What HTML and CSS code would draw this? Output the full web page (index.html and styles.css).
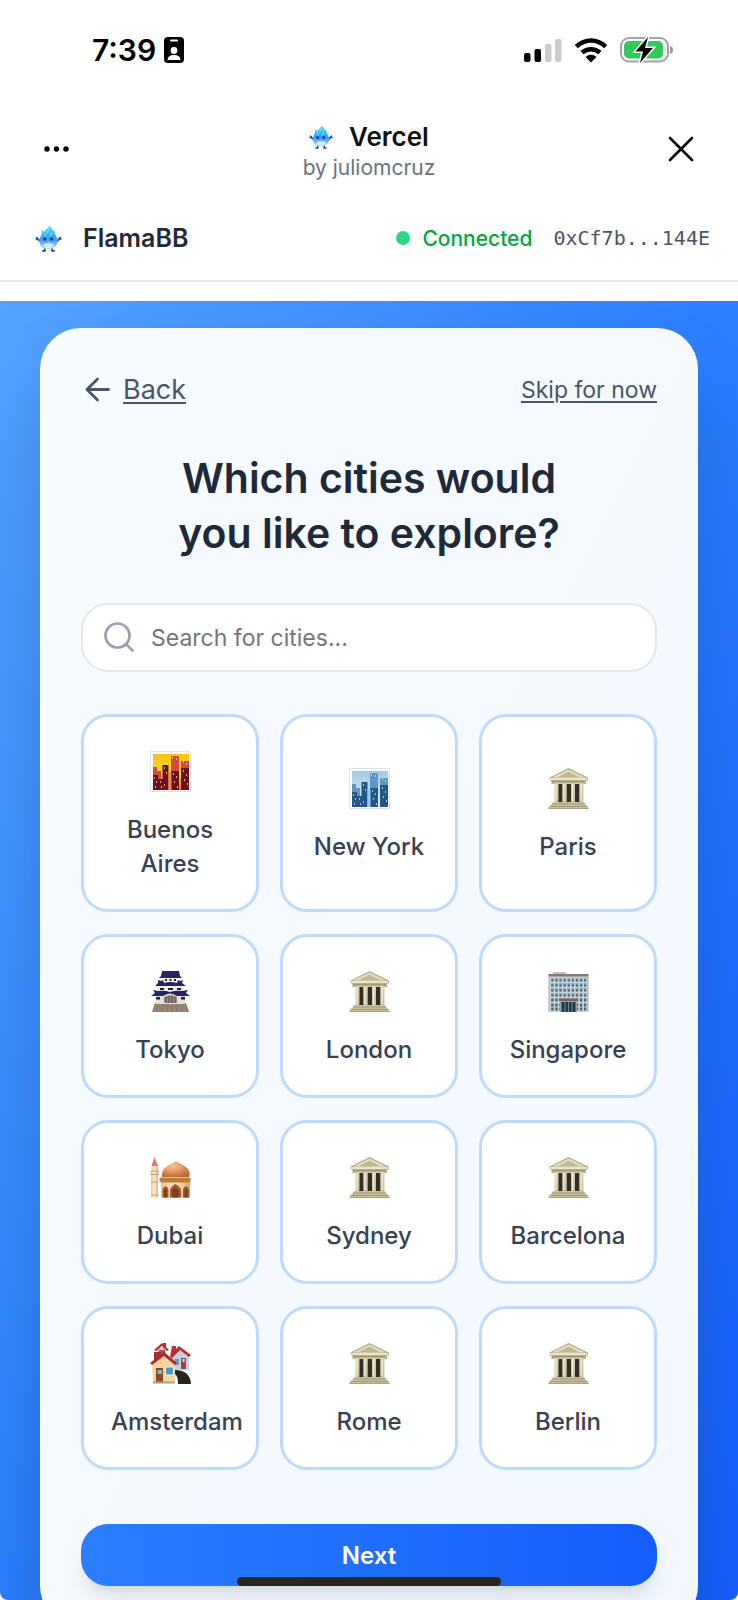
FILE: index.html
```html
<!DOCTYPE html>
<html lang="en">
<head>
<meta charset="utf-8">
<meta name="viewport" content="width=device-width, initial-scale=1">
<title>FlamaBB</title>
<link rel="stylesheet" href="styles.css">
</head>
<body>
<svg class="sprite" aria-hidden="true">
  <defs>
    <linearGradient id="flame" x1="0" y1="0" x2="0" y2="1">
      <stop offset="0" stop-color="#5fe3ef"/><stop offset=".45" stop-color="#2bb0f2"/><stop offset=".62" stop-color="#4a98f2"/><stop offset="1" stop-color="#b5e6f8"/>
    </linearGradient>
    <linearGradient id="sunset" x1="0" y1="0" x2="0" y2="1">
      <stop offset="0" stop-color="#f7c211"/><stop offset=".5" stop-color="#fbd92c"/><stop offset="1" stop-color="#f06a35"/>
    </linearGradient>
    <linearGradient id="daysky" x1="0" y1="0" x2="0" y2="1">
      <stop offset="0" stop-color="#a5cbe0"/><stop offset="1" stop-color="#d8f0fb"/>
    </linearGradient>
    <linearGradient id="stone" x1="0" y1="0" x2="0" y2="1">
      <stop offset="0" stop-color="#d9d4b4"/><stop offset="1" stop-color="#c5bf9b"/>
    </linearGradient>
    <radialGradient id="dome" cx=".4" cy=".3" r=".75">
      <stop offset="0" stop-color="#fbc39b"/><stop offset=".5" stop-color="#e8935f"/><stop offset="1" stop-color="#b86535"/>
    </radialGradient>
    <linearGradient id="sand" x1="0" y1="0" x2="1" y2="0">
      <stop offset="0" stop-color="#f0c393"/><stop offset=".5" stop-color="#fde6c8"/><stop offset="1" stop-color="#e0a469"/>
    </linearGradient>
  </defs>
  <symbol id="mascot" viewBox="0 0 26 26">
    <path d="M6 16.500 2.500 13.500M20 16.500l3.500-3" stroke="#2b7be0" stroke-width="2" stroke-linecap="round"/>
    <path d="m3.500 14.500-3-1 1-.6L1.500 11.500l2 1.500M22.500 14.500l3-1-1-.6 0-1.400-2 1.500" fill="#1f4fae" stroke="#1f4fae" stroke-width=".8"/>
    <path d="M9.500 21v4H7M16.500 21v4H19" fill="none" stroke="#23408c" stroke-width="1.700"/>
    <path d="M14 0c.3 2.500 2.800 3 3.300 6l1.200-1.500c.6 2 .2 3.500 1.600 5.500 3.600 5.300.9 13.400-7.100 13.400S2.300 15.300 5.900 10c1-1.500.3-3.500 1.100-5.500L8.900 7C10 4 13.500 3 14 0Z" fill="url(#flame)"/>
    <path d="M13 3c1 2-1 3-1.500 5M16 7c0 2-1 2-1 4M9 8c0 1.500 1 1.500 1 3" fill="none" stroke="#8ef1f3" stroke-width=".9"/>
    <ellipse cx="9.500" cy="13.500" rx="1.700" ry="1.700" fill="#1d3bc0"/><ellipse cx="16" cy="13.500" rx="1.700" ry="1.700" fill="#1d3bc0"/>
    <path d="M11.500 16q1.400 1.500 2.800 0" fill="#e2f6ff" stroke="#2457b8" stroke-width=".6"/>
    <ellipse cx="13" cy="19.800" rx="5" ry="2.600" fill="#c7eefa"/>
  </symbol>
  <symbol id="temple" viewBox="0 0 41 41">
    <path d="M20.500 0 40 9.500V12l-2 1v3H3.500v-3l-2-1V9.500Z" fill="#b7b08b"/>
    <path d="M20.500 1.500 37 9.500H4Z" fill="#e4dfc3"/><path d="M20.500 3.800 31 9H10Z" fill="#bfb893"/>
    <path d="M2 10h37v2H2Z" fill="#e9e5cc"/><path d="M4 13.500h33" stroke="#8f8968" stroke-width="1.200" stroke-dasharray="1.200 1"/>
    <path d="M7 15h28v20H7Z" fill="#d1cba8"/>
    <path d="M10 16h4.500v18H10ZM18.500 16H23v18h-4.500ZM27 16h4.500v18H27Z" fill="#352e27"/>
    <path d="M6.500 15.500h4v18h-4ZM14.500 15.500h4v18h-4ZM23 15.500h4v18h-4ZM31.500 15.500h4v18h-4Z" fill="url(#stone)"/>
    <path d="M8 16v17M16 16v17M24.500 16v17M33 16v17" stroke="#f0ecd6" stroke-width="1.200"/>
    <path d="M5 34h31l1 2 3.500 3v2H.5v-2L4 36Z" fill="#c9c39f"/>
    <path d="M4 36h33M2 38.500h37" stroke="#9d9776"/><path d="M.5 40.500h40" stroke="#a8a17e"/>
  </symbol>
  <symbol id="skyline-dusk" viewBox="0 0 41 41">
    <path d="M.5.500h40v40H.5Z" fill="#fff" stroke="#e3e4e6"/>
    <path d="M3 3h36v36H3Z" fill="url(#sunset)"/>
    <path d="M3 16h4v4h4v19H3ZM21 6l1-1h6l1 1v33h-8ZM31 10h8v29h-8Z" fill="#d64742"/>
    <path d="M12.500 14h6v25h-6ZM3 24h5v15H3ZM8 28h9v11H8ZM21 20h8v19h-8ZM31 17h8v22h-8Z" fill="#68131c"/>
    <path d="M18.500 21h3v18h-3Z" fill="#f18864"/>
    <path d="M22 7h1M26 8h1M33 11h1M36 13h1M14 17h1M16 22h1M4 27h1M6 31h1M10 31h1M14 34h1M23 23h1M26 26h1M24 31h1M27 36h1M33 20h1M36 24h1M34 29h1M37 33h1M5 36h1M11 36h1" stroke="#ffe3a4" stroke-width="1.400"/>
  </symbol>
  <symbol id="skyline-day" viewBox="0 0 41 41">
    <path d="M.5.500h40v40H.5Z" fill="#fff" stroke="#d8e6ec"/>
    <path d="M3 3h36v36H3Z" fill="url(#daysky)"/>
    <path d="M3 16h4v4h4v19H3ZM21 6l1-1h6l1 1v33h-8ZM31 10h8v29h-8Z" fill="#5d97c5"/>
    <path d="M12.500 14h6v25h-6ZM3 24h5v15H3ZM8 28h9v11H8ZM21 20h8v19h-8ZM31 17h8v22h-8Z" fill="#245586"/>
    <path d="M18.500 21h3v18h-3Z" fill="#92cbed"/>
    <path d="M22 7h1M26 8h1M33 11h1M36 13h1M14 17h1M16 22h1M4 27h1M6 31h1M10 31h1M14 34h1M23 23h1M26 26h1M24 31h1M27 36h1M33 20h1M36 24h1M34 29h1M37 33h1M5 36h1M11 36h1" stroke="#c5ebff" stroke-width="1.400"/>
  </symbol>
  <symbol id="castle" viewBox="0 0 41 41">
    <path d="m5 32-3 9h37l-3-9Z" fill="#8e7b6c"/><path d="M4 34h32M3 37h34M3 39.500h35" stroke="#a8988a" stroke-dasharray="3 2"/>
    <path d="M6 23h29v10H6Z" fill="#e7dfd7"/><path d="M8 14h25v9H8ZM13 6h15v8H13Z" fill="#f2ece5"/>
    <path d="M12 0h17l1 5 2 2H9l2-2ZM8 9l3 1 2-1 1 3q6-2 13 0l1-3 2 1 3-1-1 3 4 3H5l3-3ZM3 19l5 1q6-1 12 1 6-2 12-1l6-1-2 3 4 3H27q-7-5-14 0H1l4-3Z" fill="#25265f"/>
    <path d="M15 8h2v2h-2ZM19.500 8h2v2h-2ZM24 8h2v2h-2ZM10 17h4v2h-4ZM18 17h5v2h-5ZM27 17h4v2h-4ZM6 26h4v2.500H6ZM31 26h4v2.500h-4Z" fill="#22202f"/>
    <path d="M14 26q6.500-4 13 0v6H14Z" fill="#938c86"/><path d="M16 26v6M19 25v7M22 25v7M25 26v6" stroke="#4e4846"/>
  </symbol>
  <symbol id="office" viewBox="0 0 41 41">
    <path d="M5 1h13v3H5Z" fill="#c5c0bf"/><path d="M1 5h39v36H1Z" fill="#cdd0d3"/><path d="M.5 3h40v2.500H.5Z" fill="#85777a"/>
    <path d="M3.200 9h35M3.200 14h35M3.200 19h35M3.200 24h35M3.200 29h35M3.200 34h35M3.200 38h35" stroke="#3e6680" stroke-width="3" stroke-dasharray="2.400 1.700"/>
    <path d="M3.200 8h35M3.200 13h35M3.200 18h35M3.200 23h35" stroke="#7fb7d2" stroke-width="1.200" stroke-dasharray="2.400 1.700"/>
    <path d="M12 29h17v12H12Z" fill="#a0a4a8"/><path d="M13.500 31h14v10h-14Z" fill="#203945"/><path d="M17 31v10M20.500 31v10M24 31v10" stroke="#71909b"/>
    <path d="M11 27.500h19V30H11Z" fill="#766468"/><path d="M1 5v36M40 5v36" stroke="#a9abaf"/>
  </symbol>
  <symbol id="mosque" viewBox="0 0 41 41">
    <path d="m4.500 0 3.500 9H1.500Z" fill="#cd7e6e"/><path d="M1.500 9H8v5l1 2-1 1.500v23H1V17.500L0 16l1.500-2Z" fill="url(#sand)"/>
    <path d="M1 14h7.500M1 17.500h7.500M1 25h7.500M1 38h7.500" stroke="#cf9869"/>
    <path d="M12 20q-1-9 9-13l5-2.500L31 7q11 5 8 13Z" fill="url(#dome)"/>
    <path d="M11 25h29v15.500H11Z" fill="url(#sand)"/><path d="M9.500 20.500h31V24L39 25.500H11.500L9.500 24Z" fill="#bd7d31"/>
    <path d="M20 40.500V33q1-3.500 5.500-6 4.500 2.500 5.500 6v7.500ZM12.500 40.500v-8Q13 30 15.500 29q2.500 1 3 3.500v8ZM33 40.500v-8q.5-2.500 3-3.500 2.500 1 3 3.500v8Z" fill="#a65a2b"/>
    <path d="M22 40.500V33l3.500-3 3.500 3v7.500ZM14 40.500v-7l1.500-2 1.500 2v7ZM34.500 40.500v-7l1.500-2 1.500 2v7Z" fill="#7d4220"/>
  </symbol>
  <symbol id="houses" viewBox="0 0 41 41">
    <path d="M7 5h9v14H7Z" fill="#e7b8ac"/><path d="M9 7h6v6H9Z" fill="#75656b"/><path d="m4 7 8-7 7 7-2 1-5-5-6 5Z" fill="#b62e31"/><path d="M13 0h3v5h-3Z" fill="#b92d30"/>
    <path d="M22 13 30 5l9 8v14H21Z" fill="#c3d2df"/><path d="m20 14 2-11h4v3l3-3 12 9-2 2-9-7-8 8Z" fill="#b92d30"/>
    <path d="M31 15h5v11h-5Z" fill="#aa3e39"/><path d="M32.500 16h2v3h-2Z" fill="#e3e5df"/><path d="M25 16h4v6h-4Z" fill="#629bba"/>
    <path d="M25 27q15 0 16 14H28Q28 33 25 31Z" fill="#292424"/>
    <path d="M2 21 14 11l11 10v18H3Z" fill="#f3d6a1"/><path d="M0 20 4 17V9h7v3l3-3 13 11-2 2-11-9L2 22Z" fill="#ae2831"/>
    <path d="M6 25h7v14H6Z" fill="#8a492e"/><path d="M7.500 27H12v4H7.500Z" fill="#7eb7c8"/><path d="M15.500 24h8v8h-8Z" fill="#4e99c3" stroke="#faf1d6"/><path d="M3 39.500h22" stroke="#a7a087" stroke-width="2"/>
  </symbol>
</svg>

<div class="screen">
  <header class="top">
    <div class="status">
      <div class="status-group status-time">
        <span>7:39</span>
        <svg width="20" height="26" viewBox="0 0 20 26" aria-hidden="true">
          <rect width="20" height="26" rx="4"/><rect x="6" y="2.500" width="8" height="2" rx="1" fill="#fff"/>
          <circle cx="10" cy="13.500" r="3.400" fill="#fff"/><path d="M3.500 23q.3-5 6.500-5t6.500 5Z" fill="#fff"/>
        </svg>
      </div>
      <div class="status-group status-icons">
        <svg width="38" height="25" viewBox="0 0 38 25" aria-hidden="true">
          <rect y="15" width="6.500" height="9" rx="2"/><rect x="10.500" y="11" width="6.500" height="13" rx="2"/>
          <rect x="21" y="6" width="6.500" height="18" rx="2" fill="#ccc"/><rect x="31" y="1" width="6.500" height="23" rx="2" fill="#ccc"/>
        </svg>
        <svg width="34" height="25" viewBox="0 0 34 25" aria-hidden="true">
          <path d="M2.300 8.600Q9 2.500 17 2.500T31.700 8.600M8 14.600q4-3.400 9-3.400t9 3.400" fill="none" stroke="#000" stroke-width="4.600"/>
          <path d="M11.500 19q5.500-4.500 11 0L17 24.500Z"/>
        </svg>
        <svg width="54" height="26" viewBox="0 0 54 26" aria-hidden="true">
          <rect x="1" y="1" width="47" height="23.500" rx="8" fill="#fff" stroke="#a5a2a8" stroke-width="2"/>
          <rect x="4" y="4" width="39" height="17.500" rx="5" fill="#34c759"/><path d="M50 9q3 .5 3 4t-3 4Z" fill="#9b999e"/>
          <path d="M28 0 15.500 14.500H23L20 26l13-15h-8Z" stroke="#fff" stroke-width="3" paint-order="stroke"/>
        </svg>
      </div>
    </div>
    <div class="titlebar">
      <button class="icon-button" type="button" aria-label="More">
        <svg width="26" height="26" viewBox="0 0 26 26" aria-hidden="true"><circle cx="3" cy="13" r="2.700"/><circle cx="12.500" cy="13" r="2.700"/><circle cx="22" cy="13" r="2.700"/></svg>
      </button>
      <div class="title">
        <div class="title-name"><svg class="mascot-small" aria-hidden="true"><use href="#mascot"/></svg><strong>Vercel</strong></div>
        <div class="title-author">by juliomcruz</div>
      </div>
      <button class="icon-button" type="button" aria-label="Close">
        <svg width="26" height="26" viewBox="0 0 26 26" aria-hidden="true"><path d="m2 2 22 22M24 2 2 24" fill="none" stroke="#000" stroke-width="2.600" stroke-linecap="round"/></svg>
      </button>
    </div>
    <div class="appbar">
      <div class="brand"><svg class="mascot" aria-hidden="true"><use href="#mascot"/></svg><span>FlamaBB</span></div>
      <div class="wallet"><span class="dot"></span><span class="connected">Connected</span><span class="address">0xCf7b...144E</span></div>
    </div>
  </header>

  <main class="stage">
    <section class="card">
      <nav class="card-nav">
        <button class="back" type="button">
          <svg width="27" height="27" viewBox="0 0 27 27" aria-hidden="true"><path d="M13.500 3 3 13.500 13.500 24M3 13.500h21.500" fill="none" stroke="currentColor" stroke-width="2.800" stroke-linecap="round" stroke-linejoin="round"/></svg>
          <span>Back</span>
        </button>
        <button class="skip" type="button">Skip for now</button>
      </nav>
      <h1>Which cities would<br>you like to explore?</h1>
      <label class="search">
        <svg width="31" height="31" viewBox="0 0 31 31" aria-hidden="true"><circle cx="13.500" cy="13.500" r="12" fill="none" stroke="currentColor" stroke-width="2.700"/><path d="m22.500 22.500 6 6" stroke="currentColor" stroke-width="2.700" stroke-linecap="round"/></svg>
        <input type="text" placeholder="Search for cities..." aria-label="Search for cities">
      </label>
      <div class="cities">
        <button class="city" type="button"><svg aria-hidden="true"><use href="#skyline-dusk"/></svg><span>Buenos Aires</span></button>
        <button class="city" type="button"><svg aria-hidden="true"><use href="#skyline-day"/></svg><span>New York</span></button>
        <button class="city" type="button"><svg aria-hidden="true"><use href="#temple"/></svg><span>Paris</span></button>
        <button class="city" type="button"><svg aria-hidden="true"><use href="#castle"/></svg><span>Tokyo</span></button>
        <button class="city" type="button"><svg aria-hidden="true"><use href="#temple"/></svg><span>London</span></button>
        <button class="city" type="button"><svg aria-hidden="true"><use href="#office"/></svg><span>Singapore</span></button>
        <button class="city" type="button"><svg aria-hidden="true"><use href="#mosque"/></svg><span>Dubai</span></button>
        <button class="city" type="button"><svg aria-hidden="true"><use href="#temple"/></svg><span>Sydney</span></button>
        <button class="city" type="button"><svg aria-hidden="true"><use href="#temple"/></svg><span>Barcelona</span></button>
        <button class="city" type="button"><svg aria-hidden="true"><use href="#houses"/></svg><span>Amsterdam</span></button>
        <button class="city" type="button"><svg aria-hidden="true"><use href="#temple"/></svg><span>Rome</span></button>
        <button class="city" type="button"><svg aria-hidden="true"><use href="#temple"/></svg><span>Berlin</span></button>
      </div>
      <button class="next" type="button">Next</button>
    </section>
  </main>
  <div class="home-indicator"></div>
</div>
</body>
</html>
```
FILE: styles.css
```css
* {
  box-sizing: border-box;
}

body {
  margin: 0;
  background: #fff;
  color: #1e2939;
  font-family: Inter, "Liberation Sans", sans-serif;
}

button {
  padding: 0;
  border: 0;
  background: none;
  color: inherit;
  font: inherit;
  cursor: pointer;
}

svg {
  display: block;
  flex: none;
}

.sprite {
  position: absolute;
  width: 0;
  height: 0;
}

.screen {
  position: relative;
  display: flex;
  flex-direction: column;
  height: 100vh;
  overflow: hidden;
  border-radius: 0 0 8px 8px;
}

.top {
  flex: none;
  border-bottom: 2px solid #e5e7eb;
}

.status {
  display: flex;
  justify-content: space-between;
  align-items: center;
  height: 100px;
  padding: 0 64px 0 92px;
  color: #000;
}

.status-group {
  display: flex;
  align-items: center;
}

.status-time {
  gap: 8px;
  font-size: 30px;
  font-weight: 600;
}

.status-icons {
  gap: 12px;
}

.titlebar {
  display: flex;
  justify-content: space-between;
  align-items: center;
  height: 98px;
  padding: 0 44px;
}

.title {
  padding-top: 6px;
  text-align: center;
}

.title-name {
  display: flex;
  justify-content: center;
  align-items: center;
  gap: 16px;
  color: #111;
  font-size: 26px;
  line-height: 32px;
}

.title-name strong {
  font-weight: 600;
}

.mascot-small {
  width: 24px;
  height: 24px;
}

.title-author {
  color: #6b7280;
  font-size: 21px;
  line-height: 30px;
}

.appbar {
  display: flex;
  justify-content: space-between;
  align-items: center;
  height: 82px;
  padding: 0 28px 2px 35px;
}

.brand {
  display: flex;
  align-items: center;
  gap: 21px;
  font-size: 25px;
  font-weight: 600;
}

.mascot {
  width: 27px;
  height: 27px;
}

.wallet {
  display: flex;
  align-items: center;
  font-size: 21px;
}

.dot {
  width: 14px;
  height: 14px;
  border-radius: 50%;
  background: #2bd985;
}

.connected {
  margin: 0 21px 0 12px;
  color: #00a63e;
  font-weight: 500;
}

.address {
  color: #4a5565;
  font-family: "DejaVu Sans Mono", "Liberation Mono", monospace;
  font-size: 20px;
}

.stage {
  flex: 1;
  min-height: 0;
  margin-top: 19px;
  padding: 27px 40px;
  overflow-y: auto;
  scrollbar-width: none;
  background: linear-gradient(to bottom right, #54a2ff, #2b7fff 50%, #155dfc);
}

.card {
  padding: 41px;
  border-radius: 41px;
  background: linear-gradient(to bottom right, #f7fbff, #f3f8ff);
  box-shadow: 0 43px 86px -20px rgba(0, 0, 0, 0.25);
}

.card-nav {
  display: flex;
  justify-content: space-between;
  align-items: center;
  height: 41px;
  color: #4a5565;
}

.back {
  display: flex;
  align-items: center;
  gap: 12px;
  padding-left: 3px;
  font-size: 27px;
}

.back span,
.skip {
  text-decoration: underline;
  text-decoration-thickness: 2px;
  text-underline-offset: 3px;
}

.skip {
  font-size: 23px;
}

h1 {
  margin: 41px 0 42px;
  font-size: 41px;
  font-weight: 600;
  line-height: 55px;
  text-align: center;
}

.search {
  display: flex;
  align-items: center;
  gap: 16px;
  height: 69px;
  padding: 0 21px;
  border: 2px solid #e5e7eb;
  border-radius: 27px;
  background: #fff;
  color: #99a1af;
}

.search input {
  flex: 1;
  min-width: 0;
  padding: 0;
  border: 0;
  outline: 0;
  background: none;
  color: #1e2939;
  font: inherit;
  font-size: 23px;
}

.search input::placeholder {
  color: #757575;
}

.cities {
  display: grid;
  grid-template-columns: repeat(3, minmax(0, 1fr));
  gap: 22px 21px;
  margin: 42px 0 54px;
}

.city {
  display: flex;
  flex-direction: column;
  justify-content: center;
  align-items: center;
  gap: 21px;
  padding: 34px 27px 28px;
  border: 3px solid #bedbff;
  border-radius: 27px;
  background: #fff;
  color: #364153;
  font-size: 24px;
  font-weight: 500;
  line-height: 34px;
}

.city svg {
  width: 41px;
  height: 41px;
}

.city span {
  width: 100%;
}

.next {
  display: block;
  width: 100%;
  height: 62px;
  border-radius: 27px;
  background: linear-gradient(to right, #2b7fff, #155dfc);
  box-shadow: 0 17px 26px -5px rgba(0, 0, 0, 0.1), 0 7px 10px -7px rgba(0, 0, 0, 0.1);
  color: #fff;
  font-size: 24px;
  font-weight: 600;
}

.home-indicator {
  position: absolute;
  bottom: 14px;
  left: 50%;
  width: 264px;
  height: 9px;
  margin-left: -132px;
  border-radius: 5px;
  background: #252525;
}
```
